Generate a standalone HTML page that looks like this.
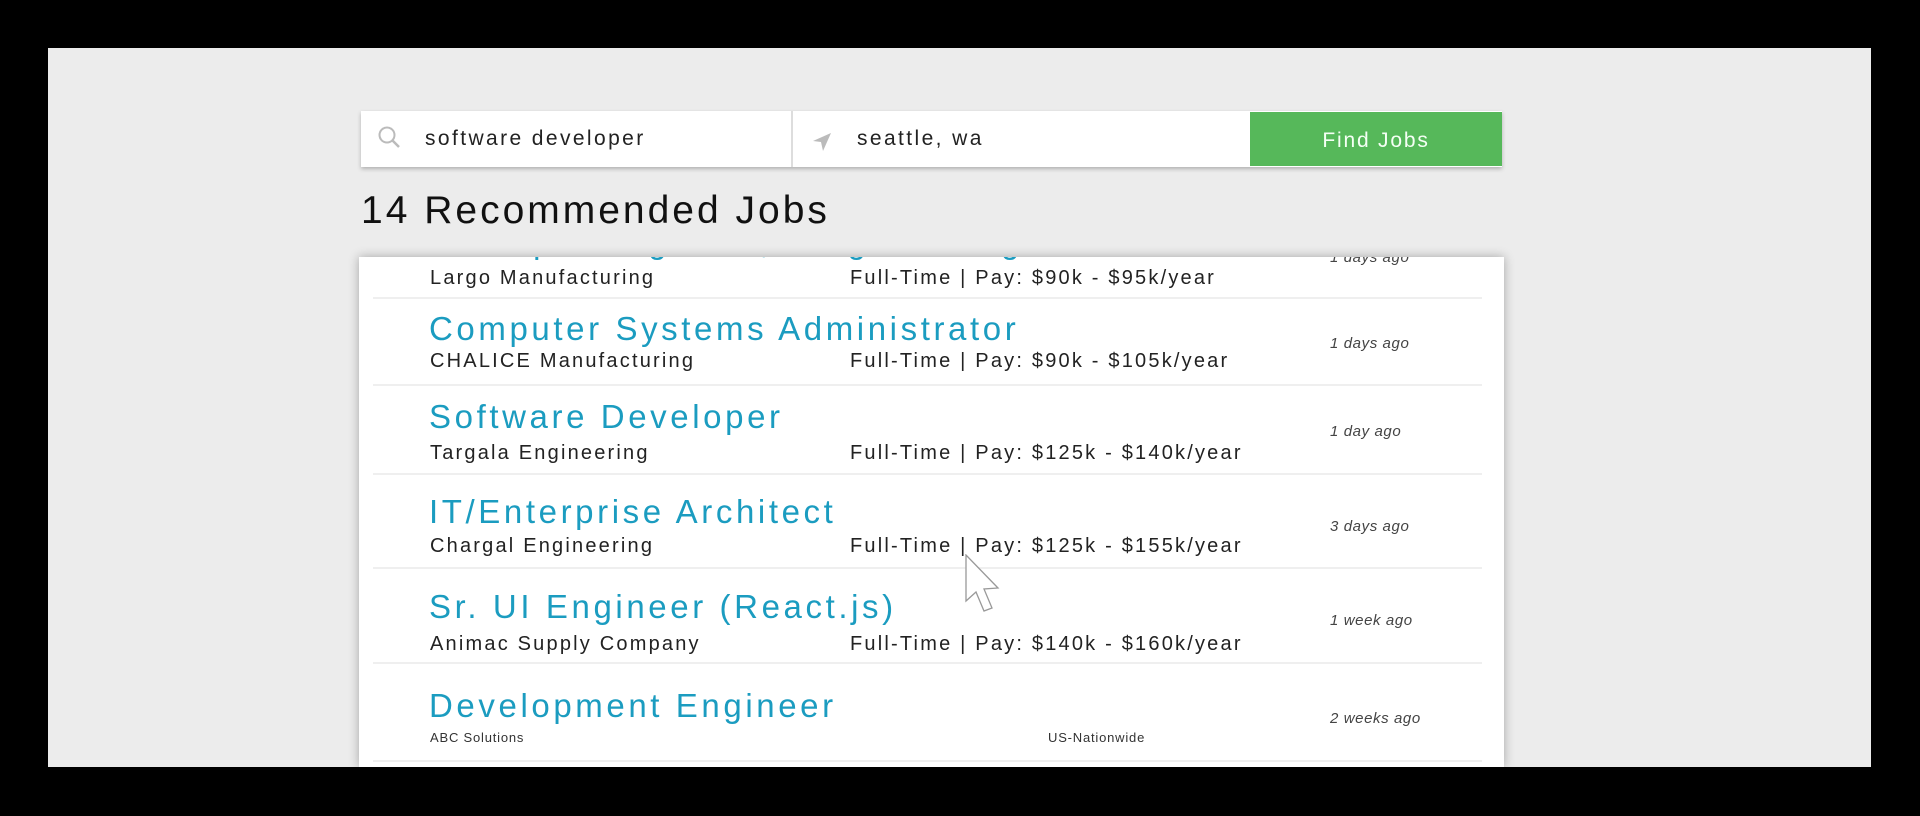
<!DOCTYPE html>
<html><head><meta charset="utf-8"><style>
*{margin:0;padding:0;box-sizing:border-box}
body{width:1920px;height:816px;background:#000;position:relative;overflow:hidden;font-family:"Liberation Sans",sans-serif}
#bg{position:absolute;left:48px;top:48px;width:1823px;height:719px;background:#ececec;overflow:hidden}
.a{position:absolute;white-space:nowrap}
#sb{position:absolute;left:361px;top:111px;width:1141px;height:56px;background:#fff;box-shadow:0 2px 4px rgba(0,0,0,.25)}
#card{position:absolute;left:359px;top:257px;width:1145px;height:510px;background:#fff;box-shadow:0 0 10px rgba(0,0,0,.3);overflow:hidden}
.t{color:#1b9cc0;font-size:33px;letter-spacing:3.6px}
.s{color:#222;font-size:20px;letter-spacing:2.2px}
.d{color:#444;font-size:15px;font-style:italic;letter-spacing:.6px}
.ln{position:absolute;left:14px;width:1109px;height:2px;background:#efefef}
</style></head><body>
<div id="bg"></div>
<div id="sb">
 <svg class="a" style="left:17px;top:15px" width="28" height="22" viewBox="0 0 28 22"><circle cx="9" cy="9" r="7.5" fill="none" stroke="#bbb" stroke-width="2"/><path d="M14.5 14.5 L21 21" stroke="#bbb" stroke-width="2.5"/></svg>
 <div class="a" style="left:64px;top:16px;font-size:21px;letter-spacing:2.4px;color:#222">software developer</div>
 <div class="a" style="left:430px;top:0;width:2px;height:56px;background:#ddd"></div>
 <svg class="a" style="left:450px;top:20px" width="22" height="22" viewBox="0 0 22 22"><path d="M20 2 L2 10 L10 11 L12 20 Z" fill="#bbb"/></svg>
 <div class="a" style="left:496px;top:16px;font-size:21px;letter-spacing:2.4px;color:#222">seattle, wa</div>
 <div class="a" style="left:889px;top:1px;width:252px;height:54px;background:#56b85a;color:#f4fff4;font-size:21px;letter-spacing:1.8px;text-align:center;line-height:58px">Find Jobs</div>
</div>
<div class="a" style="left:361px;top:189px;font-size:39px;letter-spacing:3px;color:#111">14 Recommended Jobs</div>
<div id="card">
 <div class="a t" style="left:70px;top:-34px">Principal Engineer, Programming</div>
 <div class="a d" style="left:971px;top:-8px">1 days ago</div>
 <div class="a s" style="left:71px;top:10px">Largo Manufacturing</div>
 <div class="a s" style="left:491px;top:10px">Full-Time | Pay: $90k - $95k/year</div>
 <div class="ln" style="top:40px"></div>

 <div class="a t" style="left:70px;top:53px">Computer Systems Administrator</div>
 <div class="a s" style="left:71px;top:93px">CHALICE Manufacturing</div>
 <div class="a s" style="left:491px;top:93px">Full-Time | Pay: $90k - $105k/year</div>
 <div class="a d" style="left:971px;top:78px">1 days ago</div>
 <div class="ln" style="top:127px"></div>

 <div class="a t" style="left:70px;top:141px">Software Developer</div>
 <div class="a s" style="left:71px;top:185px">Targala Engineering</div>
 <div class="a s" style="left:491px;top:185px">Full-Time | Pay: $125k - $140k/year</div>
 <div class="a d" style="left:971px;top:166px">1 day ago</div>
 <div class="ln" style="top:216px"></div>

 <div class="a t" style="left:70px;top:236px">IT/Enterprise Architect</div>
 <div class="a s" style="left:71px;top:278px">Chargal Engineering</div>
 <div class="a s" style="left:491px;top:278px">Full-Time | Pay: $125k - $155k/year</div>
 <div class="a d" style="left:971px;top:261px">3 days ago</div>
 <div class="ln" style="top:310px"></div>

 <div class="a t" style="left:70px;top:331px">Sr. UI Engineer (React.js)</div>
 <div class="a s" style="left:71px;top:376px">Animac Supply Company</div>
 <div class="a s" style="left:491px;top:376px">Full-Time | Pay: $140k - $160k/year</div>
 <div class="a d" style="left:971px;top:355px">1 week ago</div>
 <div class="ln" style="top:405px"></div>

 <div class="a t" style="left:70px;top:430px">Development Engineer</div>
 <div class="a" style="left:71px;top:473px;font-size:13px;color:#333;letter-spacing:.8px">ABC Solutions</div>
 <div class="a" style="left:689px;top:473px;font-size:13px;color:#333;letter-spacing:.8px">US-Nationwide</div>
 <div class="a d" style="left:971px;top:453px">2 weeks ago</div>
 <div class="ln" style="top:503px"></div>
</div>
<svg class="a" style="left:965px;top:554px" width="40" height="60" viewBox="0 0 40 60"><path d="M1 1 L1 47 L11 38 L19 57 L27 54 L19 35 L33 34 Z" fill="#fff" stroke="#999" stroke-width="1.3"/></svg>
</body></html>
